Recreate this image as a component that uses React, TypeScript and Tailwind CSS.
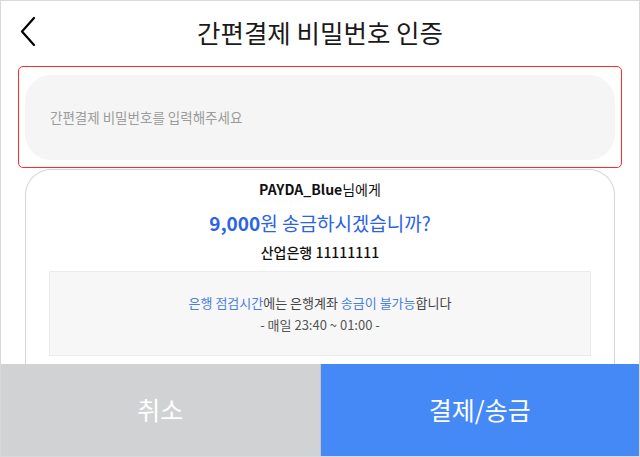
const font = { fontFamily: '"Noto Sans CJK KR", "Noto Sans", sans-serif' };

export default function App() {
  return (
    <div
      className="flex h-[457px] w-[640px] flex-col overflow-hidden border border-[#d9d9d9] bg-white text-[#111]"
      style={font}
    >
      {/* header */}
      <header className="relative flex h-[65px] shrink-0 items-center justify-center">
        <button type="button" className="absolute left-[18px] top-[14px] text-black">
          <BackIcon />
        </button>
        <h1 className="-mt-[4px] text-[25.5px] font-normal leading-none text-[#1a1a1a]">
          간편결제 비밀번호 인증
        </h1>
      </header>

      <div className="flex min-h-0 flex-1 flex-col px-[17px]">
        {/* password input, highlighted */}
        <div className="shrink-0 rounded-[5px] border border-[#ff2b2b] px-[6px] pb-[7px] pt-[8px]">
          <div className="flex h-[85px] items-center rounded-[26px] bg-[#f5f5f5] px-[25px] pb-[1px] text-[13.5px] text-[#9c9c9c]">
            간편결제 비밀번호를 입력해주세요
          </div>
        </div>

        {/* confirm card */}
        <div className="mx-[7px] mt-[1px] flex-1 rounded-t-[26px] border border-b-0 border-[#d6d6d6] px-[23px] pt-[8px]">
          <p className="text-center text-[14px] leading-[22px] text-[#111]">
            <span className="font-bold">PAYDA_Blue</span>님에게
          </p>
          <p className="mt-[10px] text-center text-[19px] leading-[26px] text-[#2a63e6]">
            <span className="font-bold">9,000</span>원 송금하시겠습니까?
          </p>
          <p className="mt-[5px] text-center text-[14px] font-medium leading-[22px] text-[#111]">
            산업은행 11111111
          </p>
          <div className="mt-[8px] flex h-[85px] flex-col items-center justify-center border border-[#ebebeb] bg-[#f7f7f7] text-[13px] leading-[22px] text-[#444]">
            <p>
              <span className="text-[#4a7fe0]">은행 점검시간</span>에는 은행계좌{' '}
              <span className="text-[#4a7fe0]">송금이 불가능</span>합니다
            </p>
            <p className="text-[#555]">- 매일 23:40 ~ 01:00 -</p>
          </div>
        </div>
      </div>

      {/* footer buttons */}
      <footer className="flex h-[92px] shrink-0">
        <button
          type="button"
          className="flex-1 border-r border-[#c4c4c4] bg-[#d1d2d4] text-[25px] text-white"
        >
          취소
        </button>
        <button type="button" className="flex-1 bg-[#4489f5] text-[25px] text-white">
          결제/송금
        </button>
      </footer>
    </div>
  );
}

function BackIcon() {
  return (
    <svg
      width="20"
      height="32"
      viewBox="0 0 20 32"
      fill="none"
      stroke="currentColor"
      strokeWidth="2.2"
      strokeLinecap="round"
      strokeLinejoin="round"
      aria-hidden="true"
    >
      <polyline points="15,3 3,16.5 15,30" />
    </svg>
  );
}
